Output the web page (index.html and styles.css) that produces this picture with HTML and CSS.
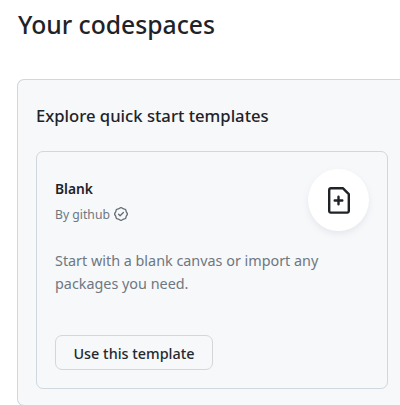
FILE: index.html
```html
<!DOCTYPE html>
<html lang="en">
<head>
<meta charset="utf-8">
<title>Codespaces</title>
<link rel="stylesheet" href="styles.css">
</head>
<body>
<h1 class="title">Your codespaces</h1>
<section class="panel">
  <h2 class="panel-title">Explore quick start templates</h2>
  <article class="card">
    <header class="card-head">
      <div class="card-meta">
        <h3 class="name">Blank</h3>
        <p class="author"><span>By github</span>
          <svg class="verified" viewBox="0 0 16 16"><path d="m9.585.52.929.68c.153.112.331.186.518.215l1.138.175a2.678 2.678 0 0 1 2.24 2.24l.174 1.139c.029.187.103.365.215.518l.68.928a2.677 2.677 0 0 1 0 3.17l-.68.928a1.174 1.174 0 0 0-.215.518l-.175 1.138a2.678 2.678 0 0 1-2.241 2.241l-1.138.175a1.17 1.17 0 0 0-.518.215l-.928.68a2.677 2.677 0 0 1-3.17 0l-.928-.68a1.174 1.174 0 0 0-.518-.215L3.83 14.41a2.678 2.678 0 0 1-2.24-2.24l-.175-1.138a1.17 1.17 0 0 0-.215-.518l-.68-.928a2.677 2.677 0 0 1 0-3.17l.68-.928c.112-.153.186-.331.215-.518l.175-1.14a2.678 2.678 0 0 1 2.24-2.24l1.139-.175c.187-.029.365-.103.518-.215l.928-.68a2.677 2.677 0 0 1 3.17 0ZM7.303 1.728l-.927.68a2.67 2.67 0 0 1-1.18.489l-1.137.174a1.179 1.179 0 0 0-.987.987l-.174 1.136a2.677 2.677 0 0 1-.489 1.18l-.68.928a1.18 1.18 0 0 0 0 1.394l.68.927c.256.348.424.753.489 1.18l.174 1.137c.078.509.478.909.987.987l1.136.174a2.67 2.67 0 0 1 1.18.489l.928.68c.414.305.979.305 1.394 0l.927-.68a2.67 2.67 0 0 1 1.18-.489l1.137-.174a1.18 1.18 0 0 0 .987-.987l.174-1.136a2.67 2.67 0 0 1 .489-1.18l.68-.928a1.176 1.176 0 0 0 0-1.394l-.68-.927a2.686 2.686 0 0 1-.489-1.18l-.174-1.137a1.179 1.179 0 0 0-.987-.987l-1.136-.174a2.677 2.677 0 0 1-1.18-.489l-.928-.68a1.176 1.176 0 0 0-1.394 0ZM11.28 6.78l-3.75 3.75a.75.75 0 0 1-1.06 0L4.72 8.78a.751.751 0 0 1 1.06-1.06L7 8.94l3.22-3.22a.751.751 0 0 1 1.06 1.06Z"/></svg>
        </p>
      </div>
      <div class="logo">
        <svg viewBox="0 0 22 27" fill="none" stroke="#1f2328" stroke-width="2.4" stroke-linecap="round" stroke-linejoin="round"><path d="M3 1.2H14.8L20.8 7.2V24.1A1.5 1.5 0 0 1 19.3 25.6H2.7A1.5 1.5 0 0 1 1.2 24.1V3A1.8 1.8 0 0 1 3 1.2ZM10.5 9.7V17.3M6.7 13.5H14.3"/></svg>
      </div>
    </header>
    <p class="description">Start with a blank canvas or import any packages you need.</p>
    <button class="use">Use this template</button>
  </article>
</section>
</body>
</html>
```
FILE: styles.css
```css
* { box-sizing: border-box; }
body { height: 405px; margin: 0; padding: 7px 0 0 17px; overflow: hidden; background: #fff; color: #1f2328; font-family: "Noto Sans", sans-serif; }
h1, h2, h3, p { margin: 0; }
.title { padding-left: 1px; font-size: 24.7px; line-height: 36px; font-weight: 500; white-space: nowrap; }
.panel { height: 327px; margin-top: 36px; padding: 24px 0 0 18px; border: 1px solid #d0d7de; border-right: 0; border-radius: 7px 0 0 7px; background: #f6f8fa; }
.panel-title { font-size: 16.65px; line-height: 24px; font-weight: 500; }
.card { width: 352px; height: 238px; margin-top: 23px; padding: 17px 18px; border: 1px solid #d0d7de; border-radius: 7px; }
.card-head { display: flex; justify-content: space-between; height: 62px; }
.name { margin-top: 8px; font-size: 13.8px; line-height: 24px; font-weight: 600; }
.author { display: flex; align-items: center; gap: 4px; margin-top: 3px; font-size: 12.2px; line-height: 21px; color: #6e7781; }
.verified { width: 14px; height: 14px; margin-top: -1px; fill: #656d76; }
.logo { display: flex; align-items: center; justify-content: center; width: 61px; height: 62px; border-radius: 50%; background: #fff; box-shadow: 0 3px 6px rgba(140,149,159,.15); }
.logo svg { width: 22px; height: 27px; margin-right: -1px; margin-top: 1px; }
.description { margin-top: 18px; font-size: 14.37px; line-height: 23px; color: #6e7781; }
.use { display: block; width: 158px; height: 35px; margin-top: 40px; padding: 1px 0 0; border: 1px solid #d3d7db; border-radius: 7px; background: #f6f8fa; color: #24292f; font: 500 14.4px/23px "Noto Sans", sans-serif; }
```
